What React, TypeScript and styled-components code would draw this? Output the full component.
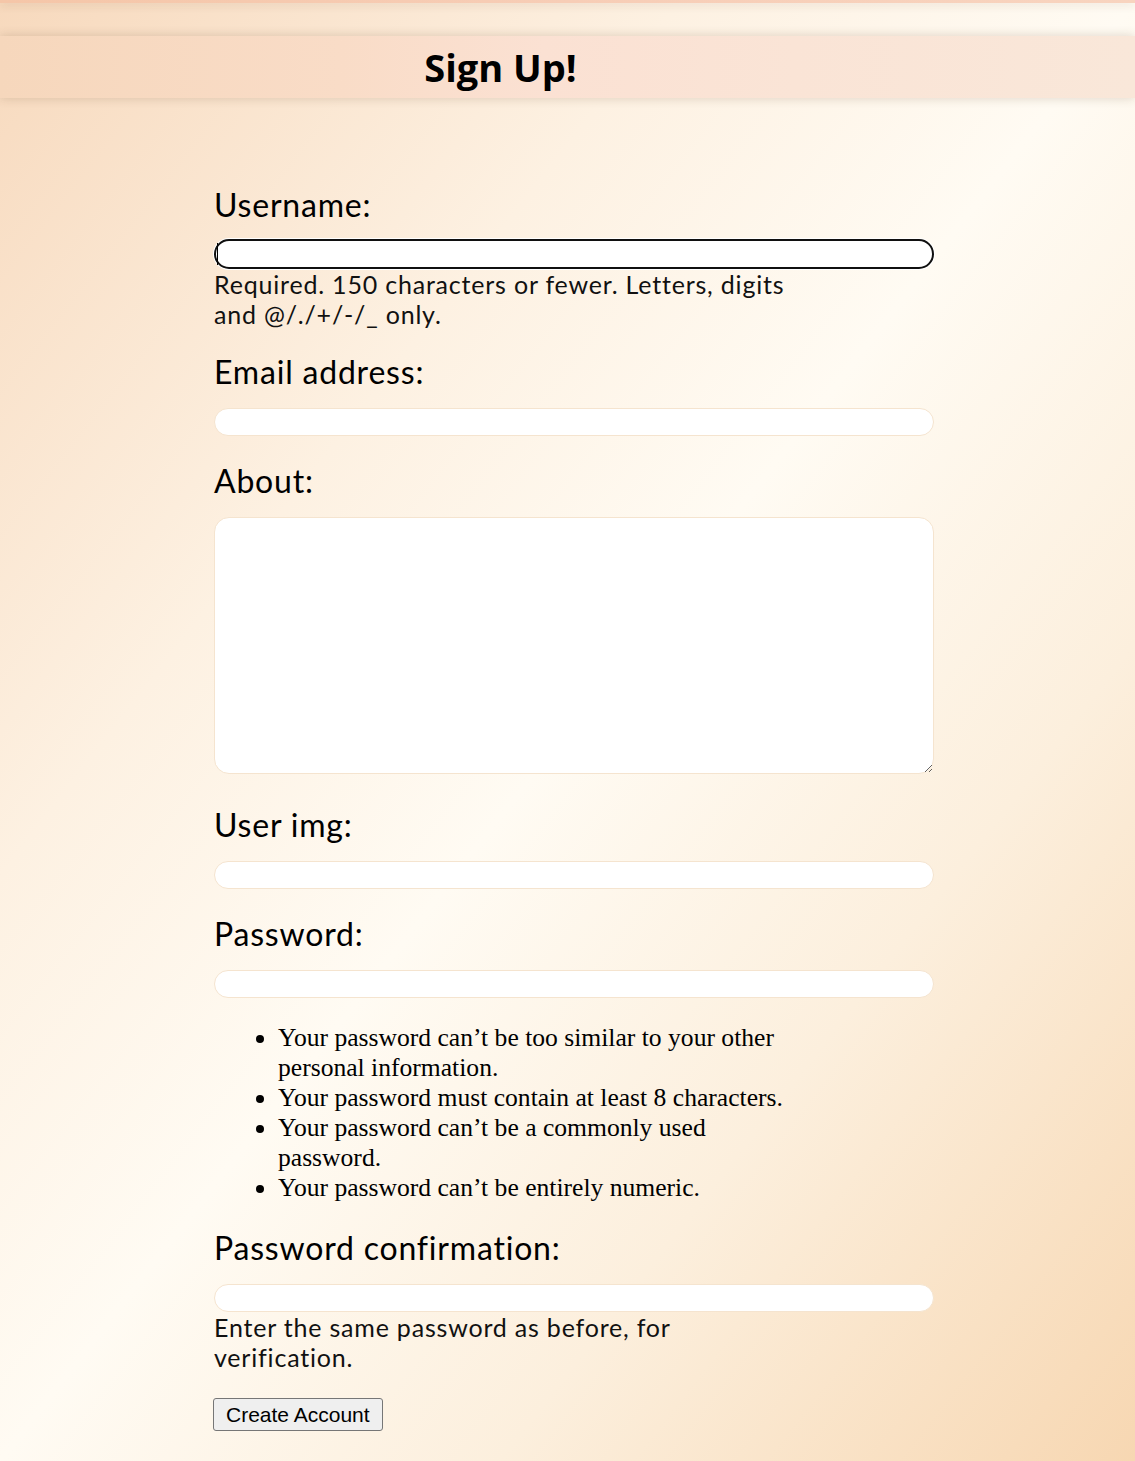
import React from "react";
import styled, { createGlobalStyle } from "styled-components";

const Global = createGlobalStyle`
  html, body { margin: 0; padding: 0; }
  body {
    min-height: 1461px;
    background: linear-gradient(to bottom right, #f7d9bd 0%, #fdf1e2 30%, #fffbf3 50%, #fcefdd 72%, #f7d7b2 100%);
    font-family: "Lato", "Open Sans", sans-serif;
    color: #000;
  }
`;

const Page = styled.div`
  min-height: 1461px;
  display: flex;
  flex-direction: column;
`;

const TopStrip = styled.div`
  height: 3px;
  background: linear-gradient(90deg, #f5c6a8, #f7cdb6 50%, #f8d4bf);
  box-shadow: 0 2px 9px rgba(90, 60, 30, 0.18);
`;

const Header = styled.header`
  margin-top: 33px;
  height: 62px;
  display: flex;
  align-items: center;
  justify-content: center;
  padding-right: 134px;
  background: linear-gradient(90deg, #f6d7bc 0%, #f9dcc7 30%, #fbe1d3 48%, #fae4d6 70%, #f9e7d9 100%);
  box-shadow: 0 0 10px rgba(90, 60, 30, 0.2);
`;

const Title = styled.h1`
  margin: 0;
  font-family: "Open Sans", "Noto Sans", sans-serif;
  font-weight: 700;
  font-size: 38px;
  letter-spacing: 0;
  line-height: 1;
`;

const Form = styled.form`
  width: 720px;
  margin: 88px 0 30px 214px;
  display: flex;
  flex-direction: column;
`;

const Field = styled.div<{ $gap?: number }>`
  display: flex;
  flex-direction: column;
  margin-top: ${(p) => p.$gap ?? 26}px;
  &:first-child { margin-top: 0; }
`;

const Label = styled.label`
  display: block;
  font-size: 32px;
  line-height: 38px;
  letter-spacing: 0.8px;
  margin-bottom: 16px;
`;

const InputWrap = styled.div`
  position: relative;
  display: flex;
  margin-top: -1px;
`;

const TextInput = styled.input<{ $focused?: boolean }>`
  box-sizing: border-box;
  width: 720px;
  height: ${(p) => (p.$focused ? 30 : 28)}px;
  margin: ${(p) => (p.$focused ? 0 : "1px 0 0 0")};
  padding: 0 12px;
  border-radius: 15px;
  background: #fff;
  font-family: inherit;
  font-size: 18px;
  outline: none;
  border: ${(p) => (p.$focused ? "2px solid #101010" : "1px solid #f5e4cf")};
  box-shadow: ${(p) => (p.$focused ? "0 0 0 1px #ffffff" : "none")};
`;

const Caret = styled.span`
  position: absolute;
  left: 3px;
  top: 4px;
  width: 1px;
  height: 22px;
  background: #000;
`;

const TextArea = styled.textarea`
  box-sizing: border-box;
  display: block;
  width: 720px;
  height: 257px;
  margin: 1px 0 0 0;
  padding: 8px 12px;
  border-radius: 15px;
  border: 1px solid #f5e4cf;
  background: #fff;
  font-family: inherit;
  font-size: 18px;
  outline: none;
`;

const Help = styled.div`
  width: 576px;
  font-size: 25px;
  line-height: 30px;
  letter-spacing: 0.8px;
  color: #111;
`;

const Rules = styled.ul`
  margin: 25px 0 0 0;
  padding-left: 64px;
  width: 516px;
  font-family: "Liberation Serif", "Times New Roman", serif;
  font-size: 25.6px;
  line-height: 30px;
  color: #000;
  letter-spacing: 0;
`;

const Button = styled.button`
  align-self: flex-start;
  margin-top: 26px;
  margin-left: -1px;
  box-sizing: border-box;
  height: 33px;
  padding: 0 12px;
  background: #efefef;
  border: 1px solid #767676;
  border-radius: 3px;
  font-family: "Liberation Sans", Arial, sans-serif;
  font-size: 21px;
  color: #000;
`;

export default function App() {
  return (
    <Page>
      <Global />
      <TopStrip />
      <Header>
        <Title>Sign Up!</Title>
      </Header>
      <Form onSubmit={(e) => e.preventDefault()}>
        <Field>
          <Label htmlFor="username">Username:</Label>
          <InputWrap>
            <TextInput id="username" type="text" $focused />
            <Caret />
          </InputWrap>
          <Help>Required. 150 characters or fewer. Letters, digits and @/./+/-/_ only.</Help>
        </Field>
        <Field $gap={24}>
          <Label htmlFor="email">Email address:</Label>
          <TextInput id="email" type="email" />
        </Field>
        <Field>
          <Label htmlFor="about">About:</Label>
          <TextArea id="about" />
        </Field>
        <Field $gap={32}>
          <Label htmlFor="img">User img:</Label>
          <TextInput id="img" type="text" />
        </Field>
        <Field>
          <Label htmlFor="password1">Password:</Label>
          <TextInput id="password1" type="password" />
          <Rules>
            <li>Your password can’t be too similar to your other personal information.</li>
            <li>Your password must contain at least 8 characters.</li>
            <li>Your password can’t be a commonly used password.</li>
            <li>Your password can’t be entirely numeric.</li>
          </Rules>
        </Field>
        <Field $gap={26}>
          <Label htmlFor="password2">Password confirmation:</Label>
          <TextInput id="password2" type="password" />
          <Help>Enter the same password as before, for verification.</Help>
        </Field>
        <Button type="submit">Create Account</Button>
      </Form>
    </Page>
  );
}
